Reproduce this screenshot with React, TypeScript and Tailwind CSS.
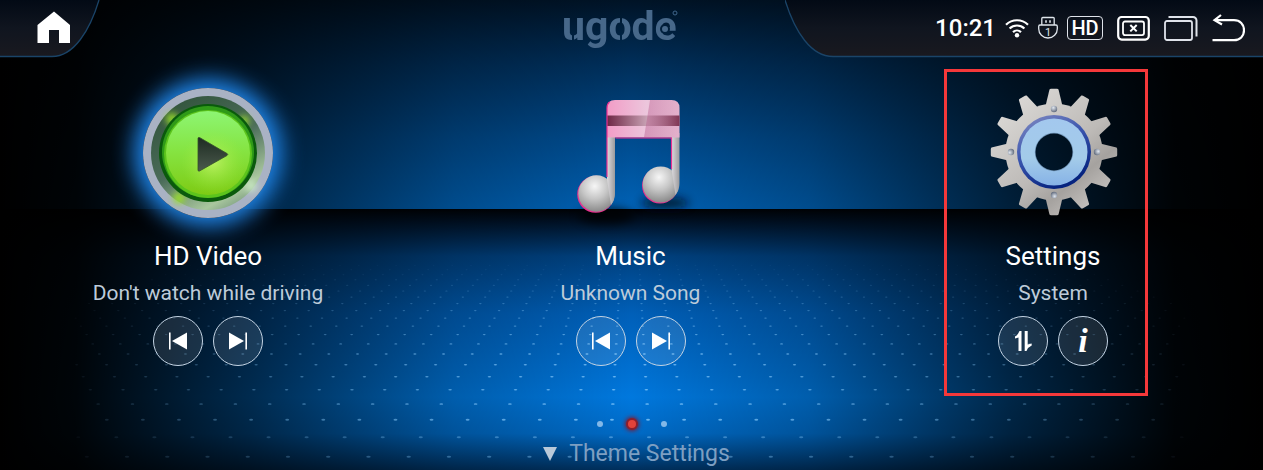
import React from "react";

/** Perspective rows of lights on the floor, converging above the horizon. */
function floorDots() {
  const dots: { x: number; y: number; r: number; o: number }[] = [];
  for (let row = 0; row < 21; row++) {
    const y = 99 + 1 / (0.002796 + 0.0001609 * row);
    const step = (y - 99) * 0.1125;
    const o = Math.min(0.75, Math.max(0.04, (y - 255) / 130)) * (y > 425 ? 0.6 : 1);
    for (let i = -24; i < 24; i++) {
      const x = 630 + (i + 0.5) * step;
      const side = Math.max(0, 1 - Math.abs(x - 630) / 570);
      if (side > 0.02) dots.push({ x, y, r: step / 22, o: o * Math.pow(side, 0.7) });
    }
  }
  return dots;
}

const DOTS = floorDots();

function Backdrop() {
  return (
    <svg
      className="absolute inset-0 h-full w-full"
      viewBox="0 0 1263 470"
      preserveAspectRatio="none"
      aria-hidden="true"
    >
      <defs>
        <linearGradient id="wall" x1="0" y1="0" x2="0" y2="1">
          <stop offset="0" stopColor="#001326" />
          <stop offset="0.3" stopColor="#002e59" />
          <stop offset="0.65" stopColor="#004a8c" />
          <stop offset="1" stopColor="#0062b6" />
        </linearGradient>
        <linearGradient id="floor" x1="0" y1="0" x2="0" y2="1">
          <stop offset="0" stopColor="#000205" />
          <stop offset="0.05" stopColor="#001227" />
          <stop offset="0.18" stopColor="#004180" />
          <stop offset="0.4" stopColor="#005fb8" />
          <stop offset="0.72" stopColor="#0078de" />
          <stop offset="0.86" stopColor="#006ac6" />
          <stop offset="1" stopColor="#002f5c" />
        </linearGradient>
        <linearGradient id="sides" x1="0" y1="0" x2="1" y2="0">
          <stop offset="0" stopColor="#000" />
          <stop offset="0.06" stopColor="#000" stopOpacity="0.96" />
          <stop offset="0.2" stopColor="#000" stopOpacity="0.64" />
          <stop offset="0.36" stopColor="#000" stopOpacity="0.22" />
          <stop offset="0.5" stopColor="#000" stopOpacity="0" />
          <stop offset="0.64" stopColor="#000" stopOpacity="0.22" />
          <stop offset="0.8" stopColor="#000" stopOpacity="0.68" />
          <stop offset="0.93" stopColor="#000" stopOpacity="0.97" />
          <stop offset="1" stopColor="#000" />
        </linearGradient>
      </defs>
      <rect width="1263" height="210" fill="url(#wall)" />
      <rect y="209" width="1263" height="261" fill="url(#floor)" />
      <rect width="1263" height="470" fill="url(#sides)" />
      {DOTS.map((d, i) => (
        <ellipse key={i} cx={d.x} cy={d.y} rx={d.r * 1.2} ry={d.r * 0.55} fill="#8fd0ff" opacity={d.o} />
      ))}
    </svg>
  );
}

function PanelFill({ id }: { id: string }) {
  return (
    <linearGradient id={id} x1="0" y1="0" x2="0" y2="1">
      <stop offset="0" stopColor="#020a15" />
      <stop offset="0.5" stopColor="#10151f" />
      <stop offset="1" stopColor="#19191f" />
    </linearGradient>
  );
}

function Logo() {
  return (
    <svg className="overflow-visible" width="122" height="48" viewBox="0 0 122 48" role="img" aria-label="ugode">
      <defs>
        <mask id="cuts" maskUnits="userSpaceOnUse" x="-10" y="-20" width="150" height="90">
          <rect x="-10" y="-20" width="150" height="90" fill="#fff" />
          <rect x="10" y="24" width="2" height="10" fill="#000" />
          <rect x="58" y="8" width="2" height="9" fill="#000" />
          <rect x="58" y="24" width="2" height="9" fill="#000" />
          <circle cx="103" cy="21" r="5" fill="#000" />
        </mask>
      </defs>
      <g fill="#47688a">
        <text x="0" y="32" mask="url(#cuts)" className="font-['Roboto'] text-[41px] font-bold">
          ugode
        </text>
        <circle cx="103" cy="21" r="3" />
      </g>
      <circle cx="113" cy="5" r="2" fill="none" stroke="#3f658a" />
    </svg>
  );
}

function WifiIcon() {
  return (
    <svg width="24" height="24" viewBox="0 0 24 24" fill="none" stroke="#fff" strokeWidth="2.2" aria-hidden="true">
      <path d="M1 8.700a15.800 15.800 0 0 1 22 0" />
      <path d="M4.600 12.500a10.600 10.600 0 0 1 14.800 0" />
      <path d="M8 16.100a5.800 5.800 0 0 1 8 0" />
      <circle cx="12" cy="19.300" r="2.200" fill="#fff" stroke="none" />
    </svg>
  );
}

function UsbIcon() {
  return (
    <svg width="20" height="24" viewBox="0 0 20 24" fill="none" stroke="#dfe5ec" strokeWidth="1.3" aria-hidden="true">
      <path d="M3.800 9V2.500a1 1 0 0 1 1-1h10.400a1 1 0 0 1 1 1V9" />
      <path d="M8 4.200v2.600M12 4.200v2.600" strokeWidth="1.6" />
      <path d="M2 9h16c1 0 1.300.6 1.300 1.400v2.300a9.300 9.300 0 0 1-18.600 0v-2.300C.7 9.600 1 9 2 9Z" />
      <text x="10" y="20" textAnchor="middle" fill="#dfe5ec" stroke="none" className="font-['Roboto'] text-[11px]">
        1
      </text>
    </svg>
  );
}

function CloseScreenIcon() {
  return (
    <svg width="33" height="26" viewBox="0 0 33 26" fill="none" stroke="#fff" aria-hidden="true">
      <rect x="1.2" y="2" width="30.6" height="22.6" rx="3.5" strokeWidth="2.2" />
      <rect x="6" y="6.5" width="21" height="13.6" rx="2" strokeWidth="1.8" />
      <path d="m13.300 10 6.400 6.400m0-6.400-6.400 6.400" strokeWidth="2" />
    </svg>
  );
}

function RecentsIcon() {
  return (
    <svg width="34" height="26" viewBox="0 0 34 26" fill="none" stroke="#dfe3ea" aria-hidden="true">
      <rect x="1" y="6" width="27" height="19" rx="2" strokeWidth="1.8" />
      <path d="M4.500 2H29a3.500 3.500 0 0 1 3.500 3.500V21.500" strokeWidth="2" />
    </svg>
  );
}

function BackIcon() {
  return (
    <svg width="33" height="28" viewBox="0 0 33 28" fill="none" stroke="#fff" strokeWidth="2.2" aria-hidden="true">
      <path d="M9 1 2.500 6.200 10 10.500" />
      <path d="M3 6.200h19c6 0 10 4 10 10s-4 10-10 10H.5" />
    </svg>
  );
}

function VideoArt() {
  return (
    <div className="size-[130px] rounded-full shadow-[0_0_22px_9px_#1f86ea]">
      <svg className="block" width="130" height="130" viewBox="0 0 130 130" aria-hidden="true">
        <defs>
          <linearGradient id="bezel" x1="0.2" y1="0" x2="0.8" y2="1">
            <stop offset="0" stopColor="#31533b" />
            <stop offset="0.5" stopColor="#4b6c5a" />
            <stop offset="0.85" stopColor="#a9c79e" />
            <stop offset="1" stopColor="#71937a" />
          </linearGradient>
          <linearGradient id="lens" x1="0" y1="0" x2="0" y2="1">
            <stop offset="0" stopColor="#8df573" />
            <stop offset="0.45" stopColor="#86e544" />
            <stop offset="1" stopColor="#7ecb14" />
          </linearGradient>
          <radialGradient id="shine">
            <stop offset="0" stopColor="#c8f56a" stopOpacity="0.8" />
            <stop offset="1" stopColor="#9aea3c" stopOpacity="0" />
          </radialGradient>
          <linearGradient id="play" x1="0" y1="0" x2="0" y2="1">
            <stop offset="0" stopColor="#1d2b22" />
            <stop offset="1" stopColor="#4b5a4d" />
          </linearGradient>
          <filter id="soft" x="-50%" y="-50%" width="200%" height="200%">
            <feGaussianBlur stdDeviation="3.5" />
          </filter>
        </defs>
        <circle cx="65" cy="65" r="65" fill="#a9b2c4" />
        <circle cx="65" cy="65" r="57" fill="url(#bezel)" />
        <g filter="url(#soft)" fill="#9ae02c">
          <circle cx="29" cy="31" r="6" />
          <circle cx="101" cy="33" r="5" />
          <circle cx="36" cy="110" r="6" />
          <circle cx="108" cy="98" r="6" fill="#c9e8c4" />
        </g>
        <circle cx="65" cy="65" r="49" fill="#0a5a0c" />
        <circle cx="65" cy="64" r="46" fill="#2f9a18" />
        <circle cx="65" cy="66" r="44" fill="#5cc41c" />
        <circle cx="65" cy="65" r="42" fill="url(#lens)" />
        <circle cx="70" cy="74" r="32" fill="url(#shine)" />
        <path
          d="M56.500 49.500 84 65.500q1.500 1 0 2L56.500 83q-1.500.5-1.500-1V50.500q0-1.500 1.500-1Z"
          fill="url(#play)"
          stroke="#35512a"
          strokeWidth="0.8"
        />
      </svg>
    </div>
  );
}

function MusicArt() {
  return (
    <svg className="block overflow-visible" width="130" height="130" viewBox="0 0 130 130" aria-hidden="true">
      <defs>
        <linearGradient id="beam" x1="0" y1="0" x2="1" y2="0">
          <stop offset="0" stopColor="#f29cc6" />
          <stop offset="0.55" stopColor="#ecc6dc" />
          <stop offset="1" stopColor="#e6b6cf" />
        </linearGradient>
        <linearGradient id="band" x1="0" y1="0" x2="1" y2="0">
          <stop offset="0" stopColor="#6e2645" />
          <stop offset="0.56" stopColor="#c9a3b5" />
          <stop offset="1" stopColor="#7d3552" />
        </linearGradient>
        <linearGradient id="glint" x1="0" y1="0" x2="1" y2="0">
          <stop offset="0" stopColor="#b04a80" stopOpacity="0.4" />
          <stop offset="1" stopColor="#b04a80" stopOpacity="0.05" />
        </linearGradient>
        <linearGradient id="stem" x1="0" y1="0" x2="1" y2="0">
          <stop offset="0" stopColor="#dcdadd" />
          <stop offset="1" stopColor="#9b9a9c" />
        </linearGradient>
        <radialGradient id="ball" cx="0.45" cy="0.3" r="0.7">
          <stop offset="0" stopColor="#f6f6f6" />
          <stop offset="0.5" stopColor="#c6c6c6" />
          <stop offset="1" stopColor="#8b8b8b" />
        </radialGradient>
        <filter id="shadow" x="-50%" y="-80%" width="200%" height="260%">
          <feGaussianBlur stdDeviation="5" />
        </filter>
      </defs>
      <ellipse cx="40" cy="128" rx="28" ry="8" fill="#000" opacity="0.7" filter="url(#shadow)" />
      <ellipse cx="99" cy="115" rx="24" ry="6" fill="#00101f" opacity="0.8" filter="url(#shadow)" />
      <circle cx="29.700" cy="106.300" r="18.500" fill="#e8308f" />
      <circle cx="94" cy="97.600" r="18" fill="#e8308f" />
      <circle cx="30.500" cy="105.500" r="18.200" fill="url(#ball)" />
      <circle cx="94.700" cy="96.500" r="18" fill="url(#ball)" />
      <path d="M41 45h8v60q0 7-4 12l-4-26Z" fill="url(#stem)" />
      <path d="M105.500 45h8v50q0 7-4 12l-4-26Z" fill="url(#stem)" />
      <path d="M41 20q0-8 8-8h56.500q8 0 8 8v29.500H41Z" fill="url(#beam)" />
      <rect x="41" y="27.500" width="72.500" height="10.500" fill="url(#band)" />
      <path d="M84 12h21.500q8 0 8 8v29.500H78Z" fill="url(#glint)" />
      <path d="M41 89V20q0-4 2.500-6M49.500 50H105.500V81" fill="none" stroke="#ec2f92" strokeWidth="1.2" />
    </svg>
  );
}

const TEETH = Array.from({ length: 12 }, (_, i) => i * 30);
const RIVETS = [0, 90, 180, 270];

function GearArt() {
  return (
    <svg className="block" width="130" height="130" viewBox="0 0 130 130" aria-hidden="true">
      <defs>
        <linearGradient id="metal" gradientUnits="userSpaceOnUse" x1="20" y1="10" x2="110" y2="120">
          <stop offset="0" stopColor="#dcdad7" />
          <stop offset="0.55" stopColor="#bdbab7" />
          <stop offset="0.75" stopColor="#a5a29f" />
          <stop offset="1" stopColor="#c9c6c3" />
        </linearGradient>
        <linearGradient id="rim" x1="0" y1="0" x2="0.5" y2="1">
          <stop offset="0" stopColor="#8790c4" />
          <stop offset="0.5" stopColor="#3a55ae" />
          <stop offset="1" stopColor="#06237f" />
        </linearGradient>
        <linearGradient id="disc" x1="0" y1="0" x2="0" y2="1">
          <stop offset="0" stopColor="#a3c8ee" />
          <stop offset="0.6" stopColor="#a3cbe9" />
          <stop offset="1" stopColor="#86b2e6" />
        </linearGradient>
        <radialGradient id="rivet" cx="0.4" cy="0.3" r="0.7">
          <stop offset="0" stopColor="#e2e8f0" />
          <stop offset="1" stopColor="#626c7e" />
        </radialGradient>
        <mask id="hole">
          <rect width="130" height="130" fill="#fff" />
          <circle cx="66" cy="64" r="18.500" fill="#000" />
        </mask>
        <mask id="gear-shape">
          <circle cx="66" cy="64" r="48.500" fill="#fff" />
          {TEETH.map((a) => (
            <path
              key={a}
              d="M57.500 18 61.500 1.500Q62 .8 63 .8h6q1 0 1.500.7L74.500 18Z"
              fill="#fff"
              transform={`rotate(${a} 66 64)`}
            />
          ))}
        </mask>
      </defs>
      <g mask="url(#hole)">
        <rect width="130" height="130" fill="url(#metal)" mask="url(#gear-shape)" />
        <circle cx="66" cy="64" r="37" fill="url(#rim)" />
        <circle cx="66" cy="64" r="33.500" fill="url(#disc)" />
        <circle cx="66" cy="64" r="19.200" fill="#6f93b5" />
      </g>
      {RIVETS.map((a) => (
        <circle key={a} cx="66" cy="21" r="3.200" fill="url(#rivet)" transform={`rotate(${a} 66 64)`} />
      ))}
    </svg>
  );
}

function PrevGlyph() {
  return (
    <svg width="20" height="20" viewBox="0 0 20 20" fill="#fff" aria-hidden="true">
      <rect x="1" y="1.500" width="1.600" height="17" />
      <path d="M19 1.500v17L4 10Z" />
    </svg>
  );
}

function NextGlyph() {
  return (
    <svg width="20" height="20" viewBox="0 0 20 20" fill="#fff" aria-hidden="true">
      <rect x="17.400" y="1.500" width="1.600" height="17" />
      <path d="M1 1.500v17L16 10Z" />
    </svg>
  );
}

function TransferGlyph() {
  return (
    <svg width="20" height="22" viewBox="0 0 20 22" fill="#fff" aria-hidden="true">
      <path d="M8.500 1v20H5.500V7.500L2 8.500V6.500Q5 5 6.500 1Z" />
      <path d="M11.700 1v20h1.800q1.500-4 5.200-5.500v-2l-4 1V1Z" />
    </svg>
  );
}

function RoundButton({ label, children }: { label: string; children: React.ReactNode }) {
  return (
    <button
      type="button"
      aria-label={label}
      className="flex size-[50px] items-center justify-center rounded-full border border-[#c3d3e3] bg-white/10"
    >
      {children}
    </button>
  );
}

type CardProps = {
  art: React.ReactNode;
  title: string;
  subtitle: string;
  marked?: boolean;
  children: React.ReactNode;
};

function Card({ art, title, subtitle, marked, children }: CardProps) {
  return (
    <section className="relative flex w-[280px] flex-col items-center">
      {art}
      <h2 className="mt-[22px] text-[26px] leading-8 text-white">{title}</h2>
      <p className="mt-[7px] text-[21px] leading-7 whitespace-nowrap text-[#bdcbd9]">{subtitle}</p>
      <div className="mt-[9px] flex gap-2.5">{children}</div>
      {marked && (
        <div className="pointer-events-none absolute -top-[19px] -bottom-[30px] left-[31px] w-[204px] border-3 border-[#f5383a]" />
      )}
    </section>
  );
}

export default function App() {
  return (
    <div className="relative min-h-screen overflow-hidden bg-black font-['Roboto',sans-serif]">
      <Backdrop />
      <div className="relative flex flex-col">
        <header className="flex h-[58px] items-start justify-between">
          <div className="relative h-[58px] w-[461px]">
            <svg className="absolute top-0 left-0" width="102" height="58" viewBox="0 0 102 58" aria-hidden="true">
              <defs>
                <PanelFill id="panel-left" />
              </defs>
              <path d="M0 0H99C90 30 74 56.500 52 56.500H0Z" fill="url(#panel-left)" />
              <path d="M99 0C90 30 74 56.500 52 56.500H0" fill="none" stroke="#1a4468" strokeWidth="1.3" />
            </svg>
            <a href="#home" aria-label="Home" className="relative ml-[37px] block w-[34px] pt-[11px]">
              <svg width="34" height="33" viewBox="0 0 34 33" fill="#fff" aria-hidden="true">
                <path d="M17 .5 33 14V32H22V19H12V32H.5V14Z" />
              </svg>
            </a>
          </div>
          <div className="pt-2">
            <Logo />
          </div>
          <div className="relative h-[58px] w-[478px]">
            <svg className="absolute inset-0" width="478" height="58" viewBox="0 0 478 58" aria-hidden="true">
              <defs>
                <PanelFill id="panel-right" />
              </defs>
              <path d="M0 0C10 32 26 56.500 48 56.500H478V0Z" fill="url(#panel-right)" />
              <path d="M0 0C10 32 26 56.500 48 56.500H478" fill="none" stroke="#1a4468" strokeWidth="1.3" />
            </svg>
            <div className="relative flex h-[55px] items-center justify-end gap-3.5 pr-[18px]">
              <div className="flex items-center gap-[9px]">
                <time className="text-2xl font-medium text-white">10:21</time>
                <WifiIcon />
                <UsbIcon />
                <span className="flex h-6 w-9 items-center justify-center rounded-sm border border-[#dfe3ea] text-xl font-medium text-white">
                  HD
                </span>
              </div>
              <button type="button" aria-label="Close screen">
                <CloseScreenIcon />
              </button>
              <button type="button" aria-label="Recent apps">
                <RecentsIcon />
              </button>
              <button type="button" aria-label="Back">
                <BackIcon />
              </button>
            </div>
          </div>
        </header>

        <main className="flex justify-between pt-[30px] pr-[70px] pl-[68px]">
          <Card art={<VideoArt />} title="HD Video" subtitle="Don't watch while driving">
            <RoundButton label="Previous video">
              <PrevGlyph />
            </RoundButton>
            <RoundButton label="Next video">
              <NextGlyph />
            </RoundButton>
          </Card>
          <Card art={<MusicArt />} title="Music" subtitle="Unknown Song">
            <RoundButton label="Previous song">
              <PrevGlyph />
            </RoundButton>
            <RoundButton label="Next song">
              <NextGlyph />
            </RoundButton>
          </Card>
          <Card art={<GearArt />} title="Settings" subtitle="System" marked>
            <RoundButton label="Data transfer">
              <TransferGlyph />
            </RoundButton>
            <RoundButton label="Information">
              <span className="font-['Liberation_Serif',serif] text-[34px] leading-none font-bold text-white italic">
                i
              </span>
            </RoundButton>
          </Card>
        </main>

        <footer className="mt-[50px] flex flex-col items-center">
          <div className="flex h-4 items-center gap-[23px]">
            <span className="size-1.5 rounded-full bg-[#82b8e8]" />
            <span className="size-3 rounded-full border-2 border-[#8a1f2c] bg-[#e2423a] shadow-[0_0_4px_1px_#7a1a35]" />
            <span className="size-1.5 rounded-full bg-[#82b8e8]" />
          </div>
          <button type="button" className="mt-2 flex items-center gap-3 pl-2.5 text-[23px] leading-7 text-[#7d9fc2]">
            <svg width="14" height="14" viewBox="0 0 14 14" aria-hidden="true">
              <path d="M0 0H14L7 14Z" fill="#b9c9d9" />
            </svg>
            Theme Settings
          </button>
        </footer>
      </div>
    </div>
  );
}
